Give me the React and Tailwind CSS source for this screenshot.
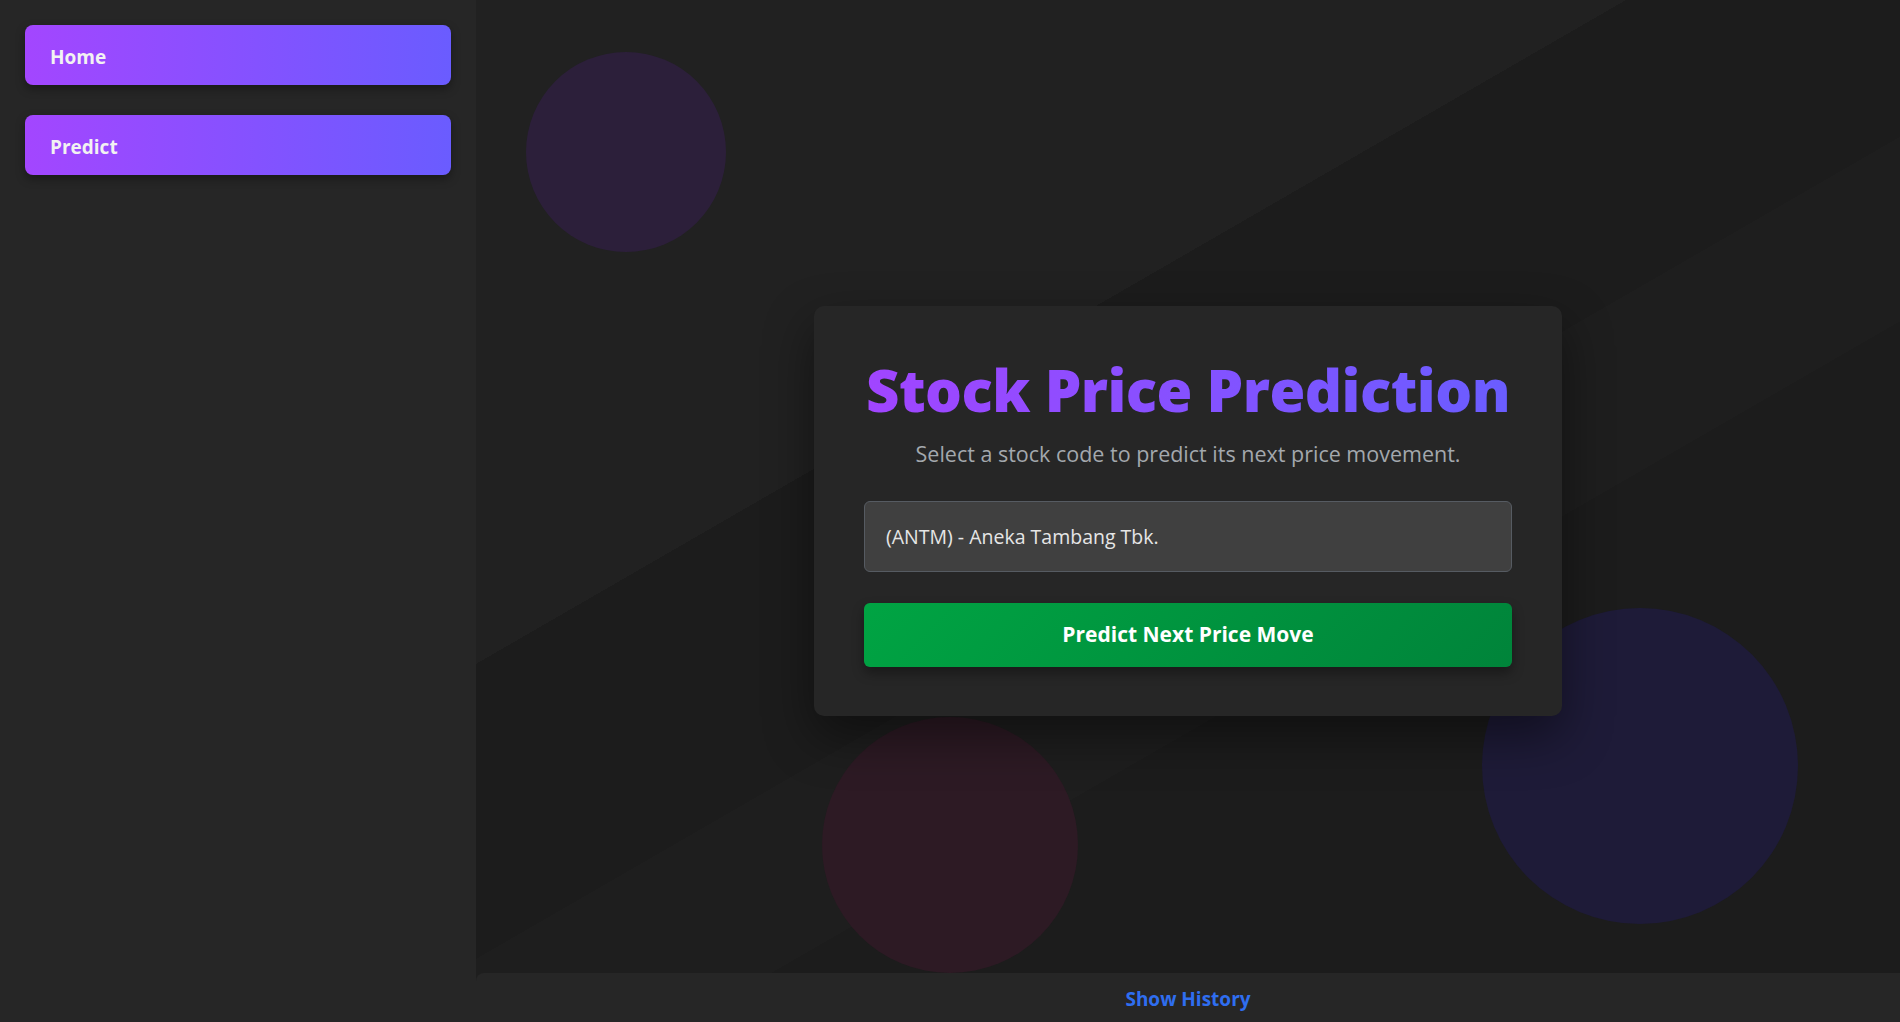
import React from "react";

export default function App() {
  return (
    <div className="flex h-screen w-full overflow-hidden bg-[#1c1c1c] font-['Open_Sans','Noto_Sans',sans-serif]">
      {/* Sidebar */}
      <aside className="flex h-full w-[476px] shrink-0 flex-col gap-[30px] bg-[#262626] p-[25px]">
        <button className="flex h-[60px] w-full items-center rounded-lg bg-[linear-gradient(90deg,#a346ff,#6a5cff)] pl-[25px] pt-[4px] text-left text-[19px] font-bold text-[#f2f2f2] shadow-[0_4px_10px_rgba(0,0,0,0.35)]">
          Home
        </button>
        <button className="flex h-[60px] w-full items-center rounded-lg bg-[linear-gradient(90deg,#a346ff,#6a5cff)] pl-[25px] pt-[4px] text-left text-[19px] font-bold text-[#f2f2f2] shadow-[0_4px_10px_rgba(0,0,0,0.35)]">
          Predict
        </button>
      </aside>

      {/* Main */}
      <main className="relative flex h-full flex-1 flex-col overflow-hidden bg-[linear-gradient(150deg,#212121_36%,#1c1c1c_36%,#1c1c1c_52%,#1e1e1e_52%,#1e1e1e_62%,#1c1c1c_62%)]">
        {/* decorative circles */}
        <div className="pointer-events-none absolute left-[50px] top-[52px] h-[200px] w-[200px] rounded-full bg-[#2c1f3a]" />
        <div className="pointer-events-none absolute left-[346px] top-[717px] h-[256px] w-[256px] rounded-full bg-[#2d1a24]" />
        <div className="pointer-events-none absolute left-[1006px] top-[608px] h-[316px] w-[316px] rounded-full bg-[#1e1b38]" />

        <section className="relative flex flex-1 items-center justify-center pt-[49px]">
          <div className="flex w-[748px] flex-col items-center rounded-[10px] bg-[#262626] px-[50px] pb-[49px] pt-[47px] shadow-[0_20px_50px_rgba(0,0,0,0.45)]">
            <h1 className="bg-[linear-gradient(90deg,#a145ff,#6a5dff)] bg-clip-text text-[58px] font-extrabold leading-[74px] tracking-[-0.5px] text-transparent">
              Stock Price Prediction
            </h1>
            <p className="mt-[12px] text-[21.5px] leading-[30px] text-[#a3a8ad]">
              Select a stock code to predict its next price movement.
            </p>
            <select
              defaultValue="ANTM"
              className="mt-[32px] h-[71px] w-full appearance-none rounded-md border border-[#565b62] bg-[#404040] px-[21px] text-[19.5px] text-[#e6e6e6] outline-none"
            >
              <option value="ANTM">(ANTM) - Aneka Tambang Tbk.</option>
            </select>
            <button className="mt-[31px] h-[64px] w-full rounded-md bg-[linear-gradient(135deg,#00a443,#00843a)] text-[21px] font-bold text-white shadow-[0_6px_12px_rgba(0,0,0,0.35)]">
              Predict Next Price Move
            </button>
          </div>
        </section>

        <footer className="relative flex h-[49px] shrink-0 items-center justify-center rounded-tl-lg bg-[#262626] pt-[4px]">
          <button className="text-[19px] font-bold text-[#2f6ef0]">Show History</button>
        </footer>
      </main>
    </div>
  );
}
